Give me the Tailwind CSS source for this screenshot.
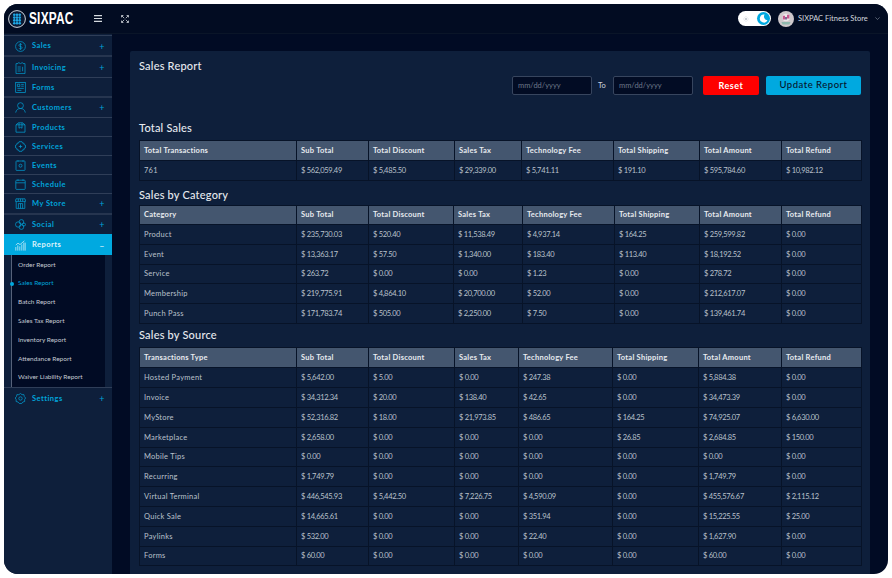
<!DOCTYPE html>
<html>
<head>
<meta charset="utf-8" />
<title>Sales Report</title>
<script src="https://cdn.jsdelivr.net/npm/@tailwindcss/browser@4"></script>
</head>
<body class="bg-white font-['Lato','Noto_Sans',sans-serif]">
<div class="w-[892px] h-[578px] pl-[4px] pr-[4px] pt-[4px] pb-[4px] overflow-hidden">
  <div class="w-full h-full rounded-[14px] overflow-hidden bg-[#010b24] flex flex-col">
    <!-- top bar -->
    <header class="h-[30px] shrink-0 flex items-center bg-[#020c22] border-b border-[#0a1528]">
      <svg class="ml-[4px] w-[18px] h-[18px]" viewBox="0 0 18 18">
        <circle cx="9" cy="9" r="8.4" fill="#0b1a33" stroke="#e8edf2" stroke-width="0.9"/>
        <g fill="#1ea8e6">
          <circle cx="6.3" cy="4.8" r="1.3"/><circle cx="9" cy="4.8" r="1.3"/><circle cx="11.7" cy="4.8" r="1.3"/>
          <circle cx="6.3" cy="7.6" r="1.3"/><circle cx="9" cy="7.6" r="1.3"/><circle cx="11.7" cy="7.6" r="1.3"/>
          <circle cx="6.3" cy="10.4" r="1.3"/><circle cx="9" cy="10.4" r="1.3"/><circle cx="11.7" cy="10.4" r="1.3"/>
          <circle cx="6.3" cy="13.2" r="1.3"/><circle cx="9" cy="13.2" r="1.3"/><circle cx="11.7" cy="13.2" r="1.3"/>
        </g>
      </svg>
      <span class="ml-[3px] w-[61px] text-white font-bold text-[16px] leading-none tracking-[0.3px] origin-left scale-x-[0.74] font-['Liberation_Sans',sans-serif]">SIXPAC</span>
      <svg class="ml-[4px] w-[8px] h-[7px]" viewBox="0 0 8 7"><path d="M0 .6h8M0 3.500h8M0 6.400h8" stroke="#d5dae0" stroke-width="1.100"/></svg>
      <svg class="ml-[19px] w-[8px] h-[8px]" viewBox="0 0 8 8" fill="none" stroke="#d5dae0" stroke-width=".8"><path d="M.5 2.400V.5h1.900M5.600.5h1.900v1.900M7.500 5.600v1.900H5.600M2.400 7.500H.5V5.600M.8.8l2.400 2.400M7.200.8 4.800 3.200M7.200 7.200 4.800 4.800M.8 7.200l2.400-2.400"/></svg>
      <div class="ml-auto flex items-center">
        <div class="w-[33px] h-[15px] rounded-full bg-white flex items-center justify-between pl-[5px]">
          <svg class="w-[6px] h-[6px]" viewBox="0 0 6 6"><circle cx="3" cy="3" r="1.300" fill="#c9ced4"/><path d="M3 0v1M3 5v1M0 3h1M5 3h1M.9.9l.7.7M4.400 4.400l.7.7M.9 5.100l.7-.7M4.400 1.600l.7-.7" stroke="#c9ced4" stroke-width=".5"/></svg>
          <span class="w-[13px] h-[13px] mr-[1px] rounded-full bg-[#00a9e0] flex items-center justify-center">
            <svg class="w-[9px] h-[9px]" viewBox="0 0 9 9"><path d="M5.600.6a4 4 0 1 0 2.900 5.600A3.600 3.600 0 0 1 5.600.6Z" fill="#fff"/></svg>
          </span>
        </div>
        <svg class="ml-[7px] w-[16px] h-[16px]" viewBox="0 0 16 16">
          <circle cx="8" cy="8" r="8" fill="#cfc9cc"/>
          <circle cx="8" cy="6.500" r="3.800" fill="#ece7ea"/>
          <path d="M4.800 4.800h2.200v3.600H4.800zM9 3.800h2.400v3.800H9z" fill="#c6588f"/>
          <path d="M7 6h2v2.600H7z" fill="#7d6a92"/>
          <path d="M3.400 11h9.200l-1.200 2.600H4.600z" fill="#8fb9ae"/>
        </svg>
        <span class="ml-[4px] text-[7.5px] text-[#d3d8de] w-[71px] whitespace-nowrap">SIXPAC Fitness Store</span>
        <svg class="ml-[6px] mr-[8px] w-[5px] h-[3px]" viewBox="0 0 5 3" fill="none"><path d="M.4.4 2.500 2.500 4.600.4" stroke="#8d97a6" stroke-width=".6"/></svg>
      </div>
    </header>

    <div class="flex-1 min-h-0 flex">
      <!-- sidebar -->
      <aside class="w-[108px] shrink-0 bg-[#0e1f3b] pt-[1px] text-[7.5px] font-bold tracking-[0.45px] text-[#00a4da]">
        <a class="h-[20px] flex items-center pl-[11px] pr-[7px] pt-[1px] border-t border-[#2f3e58]">
          <svg class="w-[11px] h-[11px]" viewBox="0 0 11 11" fill="none" stroke="#00a4da" stroke-width=".7"><circle cx="5.500" cy="5.500" r="4.900"/><path d="M7 3.900c-.3-.6-.9-.9-1.500-.9-.9 0-1.600.5-1.600 1.300 0 1.700 3.200.8 3.200 2.400 0 .8-.7 1.300-1.600 1.300-.7 0-1.300-.3-1.600-.9M5.500 2.200v6.600"/></svg>
          <span class="ml-[6px]">Sales</span><span class="ml-auto font-normal text-[9px] leading-none">+</span>
        </a>
        <a class="h-[22px] flex items-center pl-[11px] pr-[7px] pt-[1px] border-t-2 border-[#26354f]">
          <svg class="w-[11px] h-[12px]" viewBox="0 0 11 12" fill="none" stroke="#00a4da" stroke-width=".7"><path d="M1 1.600h2l.6-1 1.900 1 1.900-1 .6 1h2v10H1zM2.600 5h3.200M2.600 7h3.200M2.600 9h3.200M7.600 4.800v4.400"/></svg>
          <span class="ml-[6px]">Invoicing</span><span class="ml-auto font-normal text-[9px] leading-none">+</span>
        </a>
        <a class="h-[19px] flex items-center pl-[11px] pr-[7px] pt-[1px] border-t border-[#2f3e58]">
          <svg class="w-[11px] h-[11px]" viewBox="0 0 11 11" fill="none" stroke="#00a4da" stroke-width=".7"><rect x=".7" y=".5" width="9.600" height="10"/><path d="M2.400 2.200h2.400v2.400H2.400zM6.200 2.400h2.600M6.200 4.200h2.600M2.400 6.400h6.400M2.400 8.400h4"/></svg>
          <span class="ml-[6px]">Forms</span>
        </a>
        <a class="h-[21px] flex items-center pl-[11px] pr-[7px] border-t-2 border-[#26354f]">
          <svg class="w-[11px] h-[11px]" viewBox="0 0 11 11" fill="none" stroke="#00a4da" stroke-width=".7"><circle cx="5.500" cy="3.600" r="2.900"/><path d="M.7 10.600c.4-2.800 2.300-4.100 4.800-4.100s4.400 1.300 4.800 4.100"/></svg>
          <span class="ml-[6px]">Customers</span><span class="ml-auto font-normal text-[9px] leading-none">+</span>
        </a>
        <a class="h-[19px] flex items-center pl-[11px] pr-[7px] pt-[1px] border-t border-[#2f3e58]">
          <svg class="w-[11px] h-[11px]" viewBox="0 0 11 11" fill="none" stroke="#00a4da" stroke-width=".7"><path d="M1 2.800 3.400.8h4.200L10 2.800v7.400H1zM1 2.800h9M4 2.800v3.400l1.500-.9 1.500.9V2.800M4 .8v2M7 .8v2"/></svg>
          <span class="ml-[6px]">Products</span>
        </a>
        <a class="h-[19px] flex items-center pl-[11px] pr-[7px] pt-[1px] border-t border-[#2f3e58]">
          <svg class="w-[11px] h-[11px]" viewBox="0 0 11 11" fill="none" stroke="#00a4da" stroke-width=".7"><path d="M4 .7h3l.5 1.400 1.500.1.1 1.500 1.400.5v2.600l-1.400.5-.1 1.500-1.500.1-.5 1.400H4l-.5-1.400L2 8.800l-.1-1.500L.5 6.800V4.200l1.400-.5L2 2.200l1.500-.1zM5.500 3.800v3.400M3.800 5.500h3.400"/></svg>
          <span class="ml-[6px]">Services</span>
        </a>
        <a class="h-[19px] flex items-center pl-[11px] pr-[7px] pt-[1px] border-t border-[#2f3e58]">
          <svg class="w-[11px] h-[11px]" viewBox="0 0 11 11" fill="none" stroke="#00a4da" stroke-width=".7"><rect x="1" y="1" width="9" height="9.400" rx=".6"/><circle cx="5.500" cy="5.700" r="1.500"/><path d="M3 .3v1.400M8 .3v1.400"/></svg>
          <span class="ml-[6px]">Events</span>
        </a>
        <a class="h-[19px] flex items-center pl-[11px] pr-[7px] pt-[1px] border-t border-[#2f3e58]">
          <svg class="w-[11px] h-[11px]" viewBox="0 0 11 11" fill="none" stroke="#00a4da" stroke-width=".7"><rect x=".8" y="1.200" width="9.400" height="9.200" rx=".8"/><path d="M.8 3.800h9.400M3 .3v1.600M8 .3v1.600"/></svg>
          <span class="ml-[6px]">Schedule</span>
        </a>
        <a class="h-[20px] flex items-center pl-[11px] pr-[7px] border-t border-[#2f3e58]">
          <svg class="w-[11px] h-[11px]" viewBox="0 0 11 11" fill="none" stroke="#00a4da" stroke-width=".7"><path d="M1 .8h9l.6 2.600H.4zM1.200 3.400v7h8.600v-7M3.300.8v2.600M5.500.8v2.600M7.700.8v2.600M3.400 10.400V5.600h4.200v4.800M5.500 5.600v4.800"/></svg>
          <span class="ml-[6px]">My Store</span><span class="ml-auto font-normal text-[9px] leading-none">+</span>
        </a>
        <a class="h-[21px] flex items-center pl-[11px] pr-[7px] border-t-2 border-[#26354f]">
          <svg class="w-[11px] h-[11px]" viewBox="0 0 11 11" fill="none" stroke="#00a4da" stroke-width=".7"><circle cx="3.200" cy="5.500" r="2.700"/><circle cx="6.400" cy="2.900" r="2.300"/><circle cx="6.400" cy="8.100" r="2.300"/><circle cx="9" cy="5.500" r="1.500"/></svg>
          <span class="ml-[6px]">Social</span><span class="ml-auto font-normal text-[9px] leading-none">+</span>
        </a>
        <a class="h-[21px] flex items-center pl-[11px] pr-[7px] pt-[1px] bg-[#00a9e0] text-[#dff3fb]">
          <svg class="w-[11px] h-[11px]" viewBox="0 0 11 11" fill="none" stroke="#dff3fb" stroke-width=".7"><path d="M.8 10.600V7M2.800 10.600V5.400M4.800 10.600V6.400M6.800 10.600V4.400M8.800 10.600V2.600M10.200 10.600V2.600M.8 5 3 3.200l2 1.400 4.400-3.800"/></svg>
          <span class="ml-[6px]">Reports</span><span class="ml-auto font-normal text-[9px] leading-none">–</span>
        </a>
        <div class="relative ml-[7px] mr-[7px] bg-[#010b24] border-l border-[#56627a] h-[132px] flex flex-col pl-[6px] text-[6.5px] font-normal tracking-normal text-[#c4cad3]">
          <a class="h-[18.8px] flex items-center">Order Report</a>
          <a class="h-[18.8px] flex items-center text-[#00a4da]">Sales Report</a>
          <span class="absolute left-[-2.500px] top-[26.500px] w-[4px] h-[4px] rounded-full bg-[#00a9e0]"></span>
          <a class="h-[18.8px] flex items-center">Batch Report</a>
          <a class="h-[18.8px] flex items-center">Sales Tax Report</a>
          <a class="h-[18.8px] flex items-center">Inventory Report</a>
          <a class="h-[18.8px] flex items-center">Attendance Report</a>
          <a class="h-[18.8px] flex items-center">Waiver Liability Report</a>
        </div>
        <a class="h-[21px] flex items-center pl-[11px] pr-[7px] pt-[1px] border-t border-[#2f3e58]">
          <svg class="w-[11px] h-[11px]" viewBox="0 0 11 11" fill="none" stroke="#00a4da" stroke-width=".7"><path d="M5.500.5 7 1.700l1.900-.1.4 1.900 1.300 1.500-1 1.600.1 1.900-1.900.5L6.700 10.500H4.300L3 9l-1.900-.5.1-1.900-1-1.600L1.500 3.500l.4-1.900 1.900.1z"/><circle cx="5.500" cy="5.500" r="1.700"/></svg>
          <span class="ml-[6px]">Settings</span><span class="ml-auto font-normal text-[9px] leading-none">+</span>
        </a>
      </aside>

      <!-- content -->
      <main class="flex-1 min-w-0 pl-[18px] pr-[18px] pt-[17px]">
        <section class="h-[600px] rounded-[2px] bg-[#0e1f3b] px-[9px] pt-[8px] text-[#e6eaef]">
          <h2 class="text-[11px] leading-[14px] font-medium tracking-[0.2px]">Sales Report</h2>
          <div class="mt-[3px] flex items-center justify-end text-[7.5px]">
            <div class="w-[80px] h-[19px] rounded-[2px] bg-[#020c24] border border-[#37455e] flex items-center pl-[5px] text-[#6d7889]">mm/dd/yyyy</div>
            <span class="mx-[6px] w-[9px] text-[#cdd3db]">To</span>
            <div class="w-[80px] h-[19px] rounded-[2px] bg-[#020c24] border border-[#37455e] flex items-center pl-[5px] text-[#6d7889]">mm/dd/yyyy</div>
            <button class="ml-[10px] w-[56px] h-[19px] rounded-[2px] bg-[#fe0000] text-white text-[9px] font-bold tracking-[0.5px]">Reset</button>
            <button class="ml-[7px] w-[95px] h-[19px] rounded-[2px] bg-[#00a9e0] text-[#07132b] text-[9.5px] font-medium tracking-[0.5px]">Update Report</button>
          </div>

          <h3 class="mt-[26px] text-[11px] leading-[14px] font-medium tracking-[0.2px]">Total Sales</h3>
          <table class="mt-[5px] w-[722px] table-fixed border-collapse text-[7.5px] text-[#bac1cb] [&_td]:border [&_td]:border-[#071328] [&_td]:px-[4px] [&_td]:h-[20px] [&_td]:whitespace-nowrap [&_td]:tracking-[-0.3px] [&_td:first-child]:tracking-[0.25px] [&_th]:border [&_th]:border-[#071328] [&_th]:bg-[#44566f] [&_th]:px-[4px] [&_th]:h-[20px] [&_th]:text-left [&_th]:font-bold [&_th]:tracking-[0.25px] [&_th]:text-[#e8ebef] [&_th]:whitespace-nowrap">
            <colgroup><col class="w-[157px]"><col class="w-[72px]"><col class="w-[86px]"><col class="w-[67px]"><col class="w-[92px]"><col class="w-[86px]"><col class="w-[82px]"><col class="w-[80px]"></colgroup>
            <thead><tr><th>Total Transactions</th><th>Sub Total</th><th>Total Discount</th><th>Sales Tax</th><th>Technology Fee</th><th>Total Shipping</th><th>Total Amount</th><th>Total Refund</th></tr></thead>
            <tbody>
              <tr><td>761</td><td>$ 562,059.49</td><td>$ 5,485.50</td><td>$ 29,339.00</td><td>$ 5,741.11</td><td>$ 191.10</td><td>$ 595,784.60</td><td>$ 10,982.12</td></tr>
            </tbody>
          </table>

          <h3 class="mt-[6.5px] text-[11px] leading-[14px] font-medium tracking-[0.2px]">Sales by Category</h3>
          <table class="mt-[3.5px] w-[722px] table-fixed border-collapse text-[7.5px] text-[#bac1cb] [&_td]:border [&_td]:border-[#071328] [&_td]:px-[4px] [&_td]:h-[19.8px] [&_td]:whitespace-nowrap [&_td]:tracking-[-0.3px] [&_td:first-child]:tracking-[0.25px] [&_th]:border [&_th]:border-[#071328] [&_th]:bg-[#44566f] [&_th]:px-[4px] [&_th]:h-[19px] [&_th]:text-left [&_th]:font-bold [&_th]:tracking-[0.25px] [&_th]:text-[#e8ebef] [&_th]:whitespace-nowrap">
            <colgroup><col class="w-[157px]"><col class="w-[72px]"><col class="w-[85px]"><col class="w-[69px]"><col class="w-[92px]"><col class="w-[85px]"><col class="w-[82px]"><col class="w-[80px]"></colgroup>
            <thead><tr><th>Category</th><th>Sub Total</th><th>Total Discount</th><th>Sales Tax</th><th>Technology Fee</th><th>Total Shipping</th><th>Total Amount</th><th>Total Refund</th></tr></thead>
            <tbody>
              <tr><td>Product</td><td>$ 235,730.03</td><td>$ 520.40</td><td>$ 11,538.49</td><td>$ 4,937.14</td><td>$ 164.25</td><td>$ 259,599.82</td><td>$ 0.00</td></tr>
              <tr><td>Event</td><td>$ 13,363.17</td><td>$ 57.50</td><td>$ 1,340.00</td><td>$ 183.40</td><td>$ 113.40</td><td>$ 18,192.52</td><td>$ 0.00</td></tr>
              <tr><td>Service</td><td>$ 263.72</td><td>$ 0.00</td><td>$ 0.00</td><td>$ 1.23</td><td>$ 0.00</td><td>$ 278.72</td><td>$ 0.00</td></tr>
              <tr><td>Membership</td><td>$ 219,775.91</td><td>$ 4,864.10</td><td>$ 20,700.00</td><td>$ 52.00</td><td>$ 0.00</td><td>$ 212,617.07</td><td>$ 0.00</td></tr>
              <tr><td>Punch Pass</td><td>$ 171,783.74</td><td>$ 505.00</td><td>$ 2,250.00</td><td>$ 7.50</td><td>$ 0.00</td><td>$ 139,461.74</td><td>$ 0.00</td></tr>
            </tbody>
          </table>

          <h3 class="mt-[4px] text-[11px] leading-[14px] font-medium tracking-[0.2px]">Sales by Source</h3>
          <table class="mt-[5px] w-[722px] table-fixed border-collapse text-[7.5px] text-[#bac1cb] [&_td]:border [&_td]:border-[#071328] [&_td]:px-[4px] [&_td]:h-[19.8px] [&_td]:whitespace-nowrap [&_td]:tracking-[-0.3px] [&_td:first-child]:tracking-[0.25px] [&_th]:border [&_th]:border-[#071328] [&_th]:bg-[#44566f] [&_th]:px-[4px] [&_th]:h-[20.5px] [&_th]:text-left [&_th]:font-bold [&_th]:tracking-[0.25px] [&_th]:text-[#e8ebef] [&_th]:whitespace-nowrap">
            <colgroup><col class="w-[157px]"><col class="w-[72px]"><col class="w-[86px]"><col class="w-[64px]"><col class="w-[94px]"><col class="w-[86px]"><col class="w-[83px]"><col class="w-[80px]"></colgroup>
            <thead><tr><th>Transactions Type</th><th>Sub Total</th><th>Total Discount</th><th>Sales Tax</th><th>Technology Fee</th><th>Total Shipping</th><th>Total Amount</th><th>Total Refund</th></tr></thead>
            <tbody>
              <tr><td>Hosted Payment</td><td>$ 5,642.00</td><td>$ 5.00</td><td>$ 0.00</td><td>$ 247.38</td><td>$ 0.00</td><td>$ 5,884.38</td><td>$ 0.00</td></tr>
              <tr><td>Invoice</td><td>$ 34,312.34</td><td>$ 20.00</td><td>$ 138.40</td><td>$ 42.65</td><td>$ 0.00</td><td>$ 34,473.39</td><td>$ 0.00</td></tr>
              <tr><td>MyStore</td><td>$ 52,316.82</td><td>$ 18.00</td><td>$ 21,973.85</td><td>$ 486.65</td><td>$ 164.25</td><td>$ 74,925.07</td><td>$ 6,630.00</td></tr>
              <tr><td>Marketplace</td><td>$ 2,658.00</td><td>$ 0.00</td><td>$ 0.00</td><td>$ 0.00</td><td>$ 26.85</td><td>$ 2,684.85</td><td>$ 150.00</td></tr>
              <tr><td>Mobile Tips</td><td>$ 0.00</td><td>$ 0.00</td><td>$ 0.00</td><td>$ 0.00</td><td>$ 0.00</td><td>$ 0.00</td><td>$ 0.00</td></tr>
              <tr><td>Recurring</td><td>$ 1,749.79</td><td>$ 0.00</td><td>$ 0.00</td><td>$ 0.00</td><td>$ 0.00</td><td>$ 1,749.79</td><td>$ 0.00</td></tr>
              <tr><td>Virtual Terminal</td><td>$ 446,545.93</td><td>$ 5,442.50</td><td>$ 7,226.75</td><td>$ 4,590.09</td><td>$ 0.00</td><td>$ 455,576.67</td><td>$ 2,115.12</td></tr>
              <tr><td>Quick Sale</td><td>$ 14,665.61</td><td>$ 0.00</td><td>$ 0.00</td><td>$ 351.94</td><td>$ 0.00</td><td>$ 15,225.55</td><td>$ 25.00</td></tr>
              <tr><td>Paylinks</td><td>$ 532.00</td><td>$ 0.00</td><td>$ 0.00</td><td>$ 22.40</td><td>$ 0.00</td><td>$ 1,627.90</td><td>$ 0.00</td></tr>
              <tr><td>Forms</td><td>$ 60.00</td><td>$ 0.00</td><td>$ 0.00</td><td>$ 0.00</td><td>$ 0.00</td><td>$ 60.00</td><td>$ 0.00</td></tr>
            </tbody>
          </table>
        </section>
      </main>
    </div>
  </div>
</div>
</body>
</html>
